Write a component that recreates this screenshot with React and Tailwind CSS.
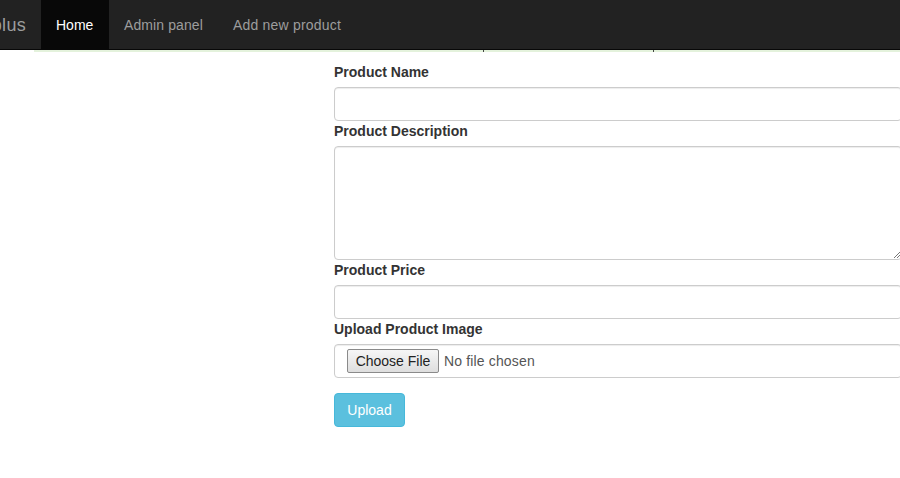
export default function App() {
  const font = { fontFamily: '"Liberation Sans", Arial, Helvetica, sans-serif' };
  return (
    <div className="w-[900px] h-[478px] overflow-hidden bg-white text-[14px] text-[#333]" style={font}>
      <nav className="h-[50px] bg-[#222] border-b border-[#080808] flex items-stretch whitespace-nowrap">
        <div className="flex items-center justify-end w-[41px] pr-[15px] text-[18px] text-[#9d9d9d] leading-[20px] overflow-hidden">
          <span className="tracking-[0.3px]">plus</span>
        </div>
        <div className="flex items-center w-[68px] pl-[15px] bg-[#080808] text-white leading-[20px]">Home</div>
        <div className="flex items-center w-[109px] pl-[15px] text-[#9d9d9d] leading-[20px] tracking-[0.1px]">Admin panel</div>
        <div className="flex items-center pl-[15px] text-[#9d9d9d] leading-[20px] tracking-[0.2px]">Add new product</div>
      </nav>
      <div className="flex">
        <div className="w-[34px] shrink-0" />
        <div className="flex-1 h-[2px] bg-[#e4f2dc] flex">
          <div className="w-[449px]" />
          <div className="w-[1px] h-[2px] bg-[#444]" />
          <div className="w-[169px]" />
          <div className="w-[1px] h-[2px] bg-[#444]" />
        </div>
      </div>
      <div className="flex">
        <div className="w-[334px] shrink-0" />
        <form className="w-[568px] shrink-0 flex flex-col pt-[10px]">
          <label className="font-bold leading-[20px] mb-[5px]">Product Name</label>
          <div className="h-[34px] border border-[#ccc] rounded-[4px] shadow-[inset_0_1px_1px_rgba(0,0,0,0.075)]" />
          <label className="font-bold leading-[20px] mb-[5px]">Product Description</label>
          <div className="relative h-[114px] border border-[#ccc] rounded-[4px] shadow-[inset_0_1px_1px_rgba(0,0,0,0.075)]">
            <svg className="absolute right-[1px] bottom-[1px]" width="6" height="6" viewBox="0 0 6 6">
              <path d="M0 6 L6 0 M3 6 L6 3" stroke="#777" strokeWidth="1" />
            </svg>
          </div>
          <label className="font-bold leading-[20px] mb-[5px]">Product Price</label>
          <div className="h-[34px] border border-[#ccc] rounded-[4px] shadow-[inset_0_1px_1px_rgba(0,0,0,0.075)]" />
          <label className="font-bold leading-[20px] mb-[5px]">Upload Product Image</label>
          <div className="h-[34px] border border-[#ccc] rounded-[4px] shadow-[inset_0_1px_1px_rgba(0,0,0,0.075)] flex items-center px-[12px]">
            <span className="h-[24px] w-[92px] flex items-center justify-center border border-[#8a8a8a] rounded-[2px] bg-gradient-to-b from-[#f6f6f6] to-[#dedede] text-[#222] text-[14px] leading-[20px]">Choose File</span>
            <span className="ml-[5px] text-[#555] tracking-[0.15px]">No file chosen</span>
          </div>
          <div className="mt-[15px]">
            <span className="inline-flex items-center justify-center w-[71px] h-[34px] rounded-[4px] bg-[#5bc0de] border border-[#46b8da] text-white leading-[20px]">Upload</span>
          </div>
        </form>
      </div>
    </div>
  );
}
